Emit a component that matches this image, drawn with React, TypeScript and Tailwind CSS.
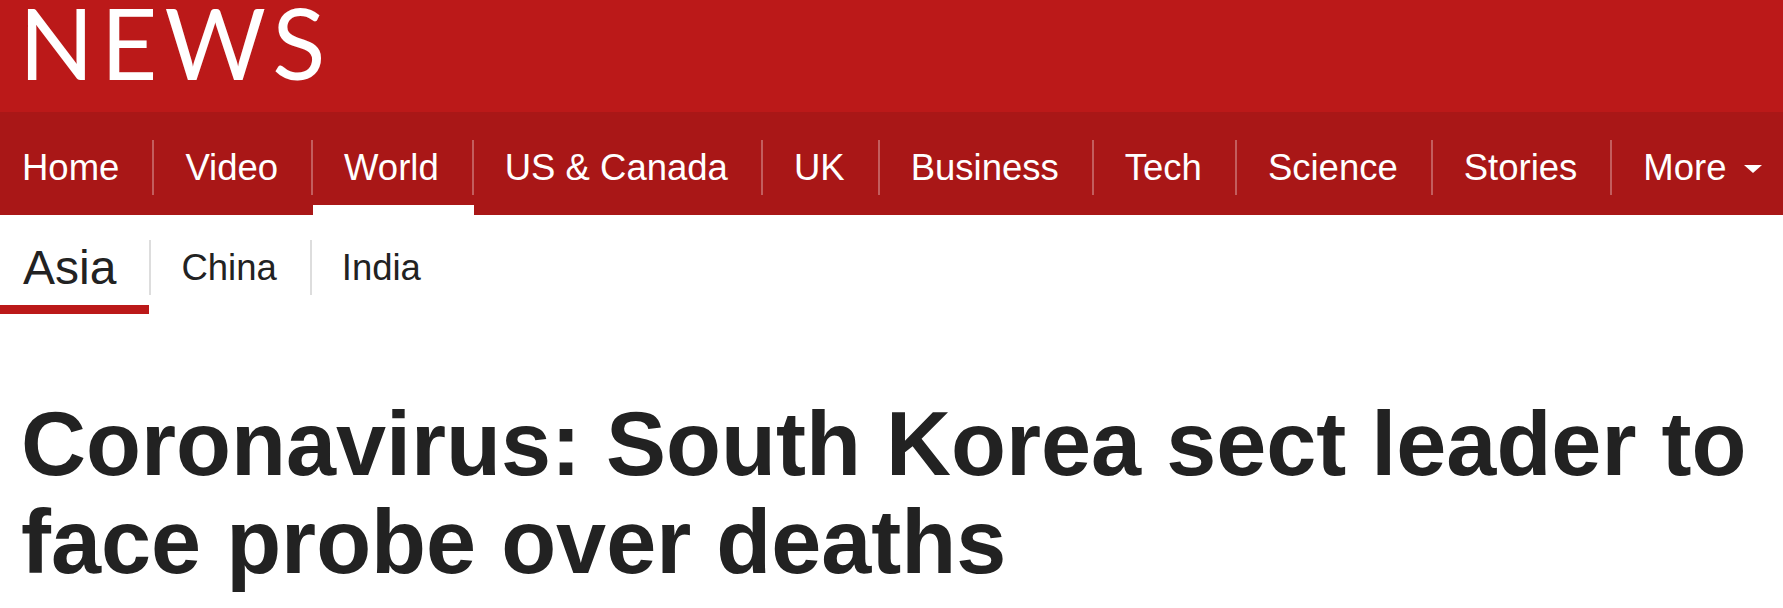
const navItems = [
  "Home",
  "Video",
  "World",
  "US & Canada",
  "UK",
  "Business",
  "Tech",
  "Science",
  "Stories",
];

const subItems = ["Asia", "China", "India"];

function MainNav() {
  return (
    <nav className="bg-[#a91717] h-[103px]">
      <ul className="flex">
        {navItems.map((item, i) => (
          <li key={item} className="flex flex-col pt-[28px]">
            <a
              href="#"
              className={`block h-[55px] leading-[55px] text-[36.5px] text-white border-r-2 border-white/30 pr-[33px] ${
                i === 0 ? "pl-[22px]" : "pl-[31px]"
              }`}
            >
              {item}
            </a>
            <div
              className={`mt-[10px] h-[10px] ${
                item === "World" ? "bg-white" : "bg-transparent"
              }`}
            />
          </li>
        ))}
        <li className="pt-[28px]">
          <a
            href="#"
            className="flex items-center h-[55px] leading-[55px] text-[36.5px] text-white pl-[31px]"
          >
            <span>More</span>
            <span className="ml-[17px] mt-[3px] w-0 h-0 border-x-[9px] border-t-[8px] border-x-transparent border-t-white" />
          </a>
        </li>
      </ul>
    </nav>
  );
}

function SubNav() {
  return (
    <ul className="flex pt-[25px]">
      {subItems.map((item, i) => (
        <li key={item} className="flex flex-col">
          <a
            href="#"
            className={`block h-[55px] leading-[55px] text-[#222222] pr-[33px] ${
              i === 0 ? "pl-[23px] text-[48px]" : "pl-[30px] text-[36.5px]"
            } ${i < subItems.length - 1 ? "border-r-2 border-[#dddddd]" : ""}`}
          >
            {item}
          </a>
          <div
            className={`mt-[10px] h-[9px] mr-[2px] ${
              i === 0 ? "bg-[#bb1919]" : "bg-transparent"
            }`}
          />
        </li>
      ))}
    </ul>
  );
}

export default function App() {
  return (
    <div
      className="min-h-[608px] bg-white"
      style={{ fontFamily: '"Liberation Sans", Arial, Helvetica, sans-serif' }}
    >
      <header className="bg-[#bb1919] h-[112px] pl-[19px] pt-[2px]">
        <span
          className="block text-white text-[98px] leading-[80px] font-normal tracking-[7px]"
          style={{ fontFamily: 'Lato, "Open Sans", sans-serif' }}
        >
          NEWS
        </span>
      </header>
      <MainNav />
      <SubNav />
      <h1 className="mt-[81px] pl-[21px] pr-[20px] text-[90px] leading-[98px] font-bold text-[#222222]">
        Coronavirus: South Korea sect leader to face probe over deaths
      </h1>
    </div>
  );
}
